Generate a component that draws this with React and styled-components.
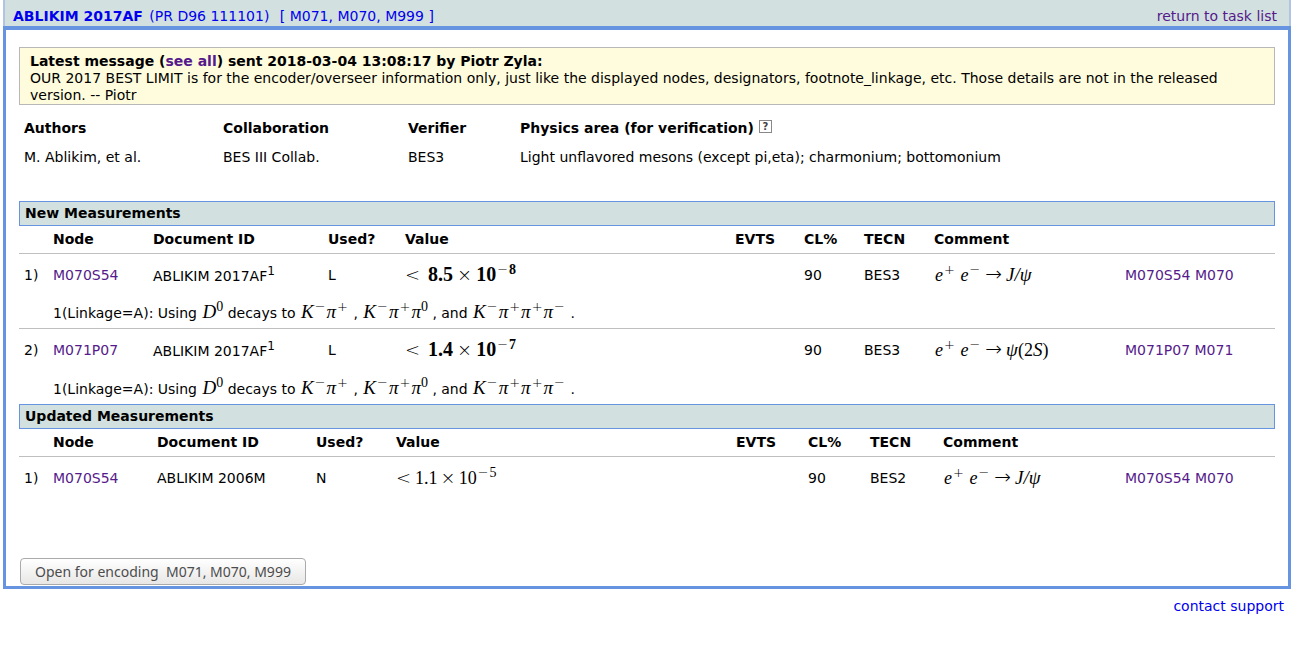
import styled, { createGlobalStyle } from "styled-components";

const GlobalStyle = createGlobalStyle`
	body {
		margin: 0;
		background-color: white;
		color: black;
		font-family: "DejaVu Sans", Verdana, sans-serif;
		font-size: 14px;
		line-height: 17px;
	}
`;

const Container = styled.div`
	padding: 0 3px;
`;

const Header = styled.div`
	display: flex;
	justify-content: space-between;
	align-items: center;
	height: 26px;
	box-sizing: border-box;
	padding: 6px 12px 0px 8px;
	border: 2px solid #b0c4e4;
	border-width: 0 2px;
	background-color: #d2e0df;
`;

const Link = styled.a`
	color: ${(props) => (props.$fresh ? "#0000ee" : "#551a8b")};
	text-decoration: none;
`;

const Paper = styled.b`
	margin-right: 2px;
`;

const Nodes = styled.span`
	margin-left: 6px;
`;

const Panel = styled.div`
	padding: 17px 13px 1px;
	border: 3px solid #6694e0;
	border-top-width: 4px;
`;

const Message = styled.div`
	padding: 5px 10px 0px;
	border: 1px solid #b8b8b8;
	background-color: #fffcdd;
`;

const Table = styled.table`
	width: 100%;
	table-layout: fixed;
	border-collapse: collapse;
`;

const Info = styled(Table)`
	margin: 9px 0px 29px;
`;

const Cell = styled.td`
	height: 29px;
	padding: 0px 5px;
	text-align: left;
	white-space: nowrap;
`;

const Help = styled.button`
	width: 13px;
	height: 13px;
	padding: 0;
	border: 1px solid #888;
	background-color: white;
	color: #444;
	font-family: "DejaVu Sans", sans-serif;
	font-size: 10px;
	font-weight: bold;
	line-height: 11px;
	vertical-align: top;
`;

const SectionTitle = styled.h2`
	margin: 0;
	padding: 3px 5px;
	border: 1px solid #6694e0;
	background-color: #d2e0df;
	font-size: 14px;
	line-height: 17px;
`;

const HeadCell = styled(Cell)`
	height: 27px;
	border-bottom: 1px solid #bfbfbf;
`;

const DataCell = styled(Cell)`
	height: 43px;
`;

const NoteCell = styled(Cell)`
	height: ${(props) => (props.$last ? "32px" : "31px")};
	border-bottom: ${(props) => (props.$last ? "none" : "1px solid #bfbfbf")};
`;

const Ref = styled.sup`
	font-size: 12px;
	line-height: 10px;
`;

const Math = styled.span`
	font-family: "Liberation Serif", "Times New Roman", serif;
	font-size: ${(props) => (props.$bold ? "20px" : "18px")};
	font-weight: ${(props) => (props.$bold ? "bold" : "normal")};
	line-height: 17px;
	margin-left: ${(props) => (props.$inline ? "1px" : "0px")};
`;

const Var = styled.i`
	font-size: 19px;
`;

const Sup = styled.sup`
	font-size: 14px;
	font-weight: inherit;
	line-height: 0;
	vertical-align: 7px;
`;

const Sign = styled.span`
	font-family: "DejaVu Sans Light", "DejaVu Sans", sans-serif;
	font-size: 13px;
	font-weight: 200;
	margin: 0px 1px;
`;

const Op = styled.span`
	font-family: "DejaVu Sans Light", "DejaVu Sans", sans-serif;
	font-size: 18px;
	font-weight: 200;
	line-height: 17px;
	margin: 0px ${(props) => (props.$wide ? "4px" : "3px")};
`;

const Less = styled(Op)`
	margin: 0px ${(props) => (props.$wide ? "8px" : "4px")} 0px 0px;
`;

const Arrow = styled(Op)`
	font-size: 20px;
`;

const Actions = styled.div`
	padding: 58px 1px 0px;
`;

const OpenButton = styled.button`
	display: block;
	height: 27px;
	padding: 0px 14px;
	border: 1px solid #aaa;
	border-radius: 4px;
	background: linear-gradient(#ffffff, #e8e7e6);
	color: #4c4c4c;
	font-family: "Noto Sans", sans-serif;
	font-size: 14px;
	line-height: 17px;
`;

const Footer = styled.div`
	padding: 9px 7px;
	text-align: right;
`;

const newWidths = [29, 100, 175, 77, null, 69, 60, 70, 191, 155];
const updatedWidths = [29, 104, 159, 80, null, 72, 62, 73, 182, 155];
const titles = ["", "Node", "Document ID", "Used?", "Value", "EVTS", "CL%", "TECN", "Comment", ""];

const newRows = [
	{
		node: "M070S54",
		parent: "M070",
		doc: "ABLIKIM 2017AF",
		used: "L",
		value: "8.5",
		power: "8",
		bold: true,
		tecn: "BES3",
		final: "jpsi",
		note: true,
	},
	{
		node: "M071P07",
		parent: "M071",
		doc: "ABLIKIM 2017AF",
		used: "L",
		value: "1.4",
		power: "7",
		bold: true,
		tecn: "BES3",
		final: "psi2s",
		note: true,
	},
];

const updatedRows = [
	{
		node: "M070S54",
		parent: "M070",
		doc: "ABLIKIM 2006M",
		used: "N",
		value: "1.1",
		power: "5",
		tecn: "BES2",
		final: "jpsi",
	},
];

const Charge = ({ children }) => (
	<Sup>
		<Sign>{children}</Sign>
	</Sup>
);

const Limit = ({ value, power, bold }) => (
	<Math $bold={bold}>
		<Less $wide={bold}>&lt;</Less>
		{value}
		<Op $wide={bold}>×</Op>
		10
		<Sup>
			<Sign>−</Sign>
			{power}
		</Sup>
	</Math>
);

const Reaction = ({ final }) => (
	<Math $inline>
		<i>e</i>
		<Charge>+</Charge> <i>e</i>
		<Charge>−</Charge>
		<Arrow $wide>→</Arrow>
		{final === "jpsi" ? (
			<Var>J/ψ</Var>
		) : (
			<>
				<Var>ψ</Var>(2<Var>S</Var>)
			</>
		)}
	</Math>
);

const Kaon = () => (
	<>
		<Var>K</Var>
		<Charge>−</Charge>
	</>
);

const Pion = ({ charge }) => (
	<>
		<Var>π</Var>
		{charge === "0" ? <Sup>0</Sup> : <Charge>{charge}</Charge>}
	</>
);

const Note = () => (
	<>
		1(Linkage=A): Using{" "}
		<Math $inline>
			<Var>D</Var>
			<Sup>0</Sup>
		</Math>{" "}
		decays to{" "}
		<Math $inline>
			<Kaon />
			<Pion charge="+" />
		</Math>{" "}
		,{" "}
		<Math $inline>
			<Kaon />
			<Pion charge="+" />
			<Pion charge="0" />
		</Math>{" "}
		, and{" "}
		<Math $inline>
			<Kaon />
			<Pion charge="+" />
			<Pion charge="+" />
			<Pion charge="−" />
		</Math>{" "}
		.
	</>
);

const Measurements = ({ title, widths, rows }) => (
	<section>
		<SectionTitle>{title}</SectionTitle>
		<Table>
			<colgroup>
				{widths.map((w, i) => (
					<col key={i} width={w || undefined} />
				))}
			</colgroup>
			<thead>
				<tr>
					{titles.map((t, i) => (
						<HeadCell as="th" key={i}>
							{t}
						</HeadCell>
					))}
				</tr>
			</thead>
			{rows.map((row, i) => (
				<tbody key={row.node}>
					<tr>
						<DataCell>{i + 1})</DataCell>
						<DataCell>
							<Link href="#">{row.node}</Link>
						</DataCell>
						<DataCell>
							{row.doc}
							{row.note && <Ref>1</Ref>}
						</DataCell>
						<DataCell>{row.used}</DataCell>
						<DataCell>
							<Limit value={row.value} power={row.power} bold={row.bold} />
						</DataCell>
						<DataCell></DataCell>
						<DataCell>90</DataCell>
						<DataCell>{row.tecn}</DataCell>
						<DataCell>
							<Reaction final={row.final} />
						</DataCell>
						<DataCell>
							<Link href="#">{row.node}</Link> <Link href="#">{row.parent}</Link>
						</DataCell>
					</tr>
					{row.note && (
						<tr>
							<NoteCell $last={i === rows.length - 1}></NoteCell>
							<NoteCell $last={i === rows.length - 1} colSpan={9}>
								<Note />
							</NoteCell>
						</tr>
					)}
				</tbody>
			))}
		</Table>
	</section>
);

const App = () => {
	return (
		<Container>
			<GlobalStyle />
			<Header>
				<Link $fresh href="#">
					<Paper>ABLIKIM 2017AF</Paper> (PR D96 111101) <Nodes>[ M071, M070, M999 ]</Nodes>
				</Link>
				<Link href="#">return to task list</Link>
			</Header>
			<Panel>
				<Message>
					<b>
						Latest message (<Link href="#">see all</Link>) sent 2018-03-04 13:08:17 by Piotr Zyla:
					</b>
					<br />
					OUR 2017 BEST LIMIT is for the encoder/overseer information only, just like the displayed
					nodes, designators, footnote_linkage, etc. Those details are not in the released version.
					-- Piotr
				</Message>
				<Info>
					<colgroup>
						<col width="199" />
						<col width="185" />
						<col width="112" />
						<col />
					</colgroup>
					<thead>
						<tr>
							<Cell as="th">Authors</Cell>
							<Cell as="th">Collaboration</Cell>
							<Cell as="th">Verifier</Cell>
							<Cell as="th">
								Physics area (for verification) <Help aria-label="Help">?</Help>
							</Cell>
						</tr>
					</thead>
					<tbody>
						<tr>
							<Cell>M. Ablikim, et al.</Cell>
							<Cell>BES III Collab.</Cell>
							<Cell>BES3</Cell>
							<Cell>Light unflavored mesons (except pi,eta); charmonium; bottomonium</Cell>
						</tr>
					</tbody>
				</Info>
				<Measurements title="New Measurements" widths={newWidths} rows={newRows} />
				<Measurements title="Updated Measurements" widths={updatedWidths} rows={updatedRows} />
				<Actions>
					<OpenButton>Open for encoding&nbsp; M071, M070, M999</OpenButton>
				</Actions>
			</Panel>
			<Footer>
				<Link $fresh href="#">
					contact support
				</Link>
			</Footer>
		</Container>
	);
};

export default App;
